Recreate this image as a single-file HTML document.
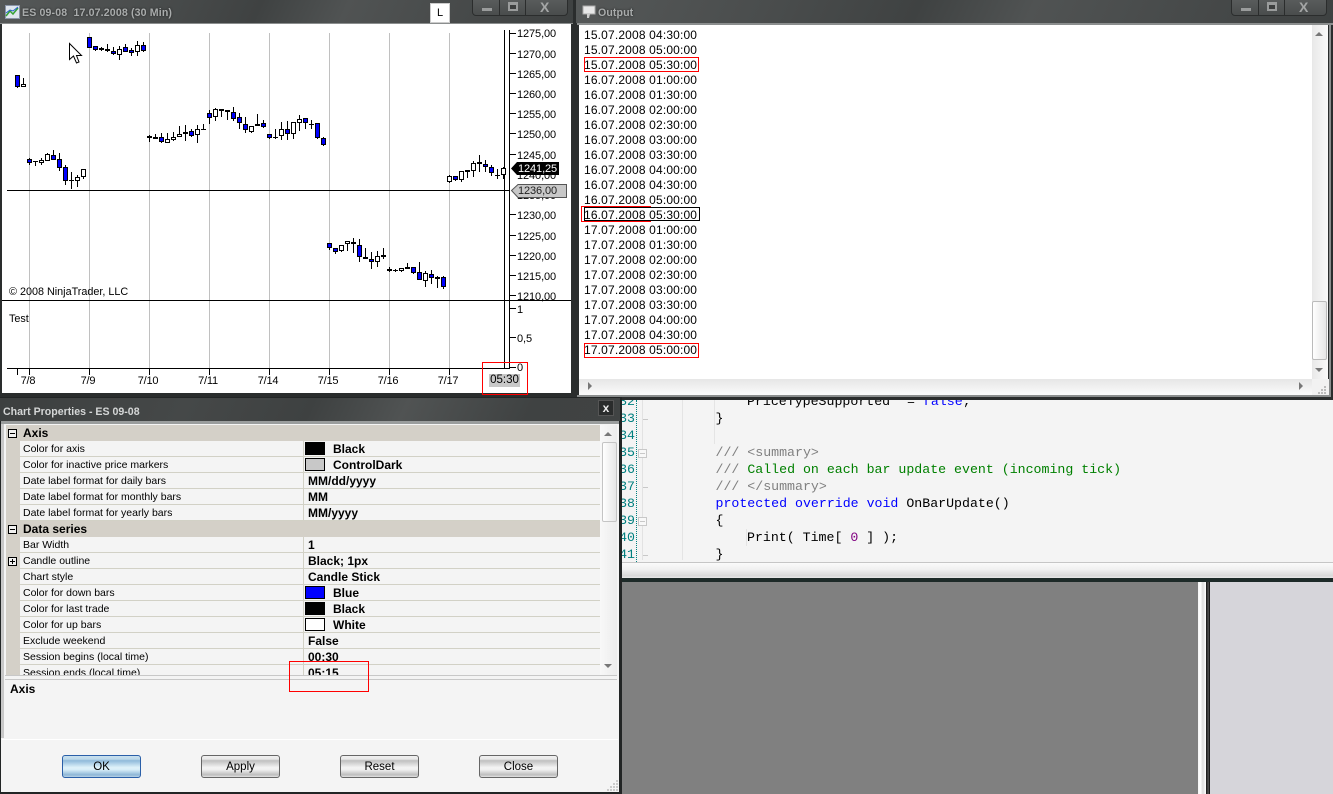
<!DOCTYPE html>
<html><head><meta charset="utf-8"><title>Chart</title>
<style>
html,body{margin:0;padding:0;background:#f4f4f4}
#p{position:relative;width:1333px;height:794px;overflow:hidden;font-family:"Liberation Sans",sans-serif;font-size:11px;color:#000;background:#f4f4f4}
#p div,#p span.a,#p svg{position:absolute}
.t{white-space:pre;line-height:14px}
.tb{background:linear-gradient(115deg,#555858 0,#4a4d4d 25%,#3f4242 45%,#505353 60%,#474a4a 80%,#3e4141 100%)}
.tt{font-weight:bold;color:#a9acac;white-space:pre;text-shadow:0 0 2px #222}
.r{left:14px;width:580px;height:15px;background:#f4f4f4;border-bottom:1px solid #d2d1c6}
.l{left:17px;line-height:17px;white-space:pre;font-size:10.5px}
.v{left:302px;line-height:17px;white-space:pre;font-size:12px;font-weight:bold}
.n{left:327px;line-height:17px;white-space:pre;font-size:12px;font-weight:bold}
.s{left:299px;width:18px;height:11px;border:1px solid #000}
.h{left:0;width:594px;height:16px;background:#d4d0c8;line-height:16px;font-weight:bold;font-size:12px}
.b{height:21px;width:77px;border:1px solid #666;border-radius:3px;text-align:center;line-height:22px;font-size:11.5px;background:linear-gradient(#f0f0f0 0,#e8e8e8 15%,#bfbfbf 22%,#f4f4f4 55%,#f0f0f0 65%,#bdbdbd 90%,#e4e4e4 100%)}
.pr{left:517px;line-height:14px;font-size:11px;letter-spacing:-.1px}
.d{top:374px;width:40px;text-align:center;line-height:14px;font-size:11px;letter-spacing:-.2px}
.c{font-family:"Liberation Mono",monospace;font-size:13.25px;line-height:17px;white-space:pre;color:#000}
.g{color:#808080}.gr{color:#008000}.bl{color:#0000ff}
.ln{left:622px;width:13px;text-align:right;overflow:hidden;direction:rtl;font-family:"Liberation Mono",monospace;font-size:13.25px;line-height:17px;color:#008080}
.box{border:1px solid #c8c8c8;width:7px;height:7px;left:638px;background:#f8f8f8}
.red{background:#ff0000}
.blk{background:#000}
</style></head><body><div id="p">

<!-- code window -->
<div style="left:622px;top:400px;width:711px;height:162px;background:#f4f4f4;overflow:hidden"></div>
<div style="left:636px;top:400px;height:162px;border-left:1px dotted #008080"></div>
<div style="left:642px;top:400px;width:1px;height:160px;background:#e2e2e2"></div>
<div style="left:682px;top:400px;width:1px;height:160px;background:#e4e4e4"></div>
<div style="left:714px;top:400px;width:1px;height:34px;background:#e4e4e4"></div>
<div style="left:714px;top:427px;width:1px;height:17px;background:#e4e4e4"></div>
<div style="left:746px;top:529px;width:1px;height:17px;background:#e4e4e4"></div>
<div class="ln" style="top:393px">32</div>
<div class="ln" style="top:410px">33</div>
<div class="ln" style="top:427px">34</div>
<div class="ln" style="top:444px">35</div>
<div class="ln" style="top:461px">36</div>
<div class="ln" style="top:478px">37</div>
<div class="ln" style="top:495px">38</div>
<div class="ln" style="top:512px">39</div>
<div class="ln" style="top:529px">40</div>
<div class="ln" style="top:546px">41</div>
<div class="box" style="top:449px"></div>
<div class="box" style="top:517px"></div>
<div style="left:640px;top:453px;width:5px;height:1px;background:#c8c8c8"></div>
<div style="left:640px;top:521px;width:5px;height:1px;background:#c8c8c8"></div>
<div style="left:643px;top:419px;width:5px;height:1px;background:#c8c8c8"></div>
<div style="left:643px;top:487px;width:5px;height:1px;background:#c8c8c8"></div>
<div style="left:643px;top:555px;width:5px;height:1px;background:#c8c8c8"></div>
<div style="left:622px;top:400px;width:711px;height:162px;overflow:hidden">
<div class="c" style="left:125px;top:-7px">PriceTypeSupported</div>
<div class="c" style="left:285px;top:-7px">= <span class="bl">false</span>;</div>
<div class="c" style="left:93.5px;top:10px">}</div>
<div class="c g" style="left:93.5px;top:44px">/// &lt;summary&gt;</div>
<div class="c" style="left:93.5px;top:61px"><span class="g">/// </span><span class="gr">Called on each bar update event (incoming tick)</span></div>
<div class="c g" style="left:93.5px;top:78px">/// &lt;/summary&gt;</div>
<div class="c" style="left:93.5px;top:95px"><span class="bl">protected override void</span> OnBarUpdate()</div>
<div class="c" style="left:93.5px;top:112px">{</div>
<div class="c" style="left:125px;top:129px">Print( Time[ <span style="color:#800080">0</span> ] );</div>
<div class="c" style="left:93.5px;top:146px">}</div>
</div>
<!-- code scrollbar -->
<div style="left:622px;top:562px;width:711px;height:16px;border-top:1px solid #c6c6c6;background:linear-gradient(#fbfbfb,#f0f0f0 40%,#d8d8d8 80%,#f0f0f0)"></div>
<div style="left:622px;top:578px;width:711px;height:4px;background:#1d2a28"></div>
<!-- bottom panels -->
<div style="left:622px;top:582px;width:576px;height:212px;background:#808080"></div>
<div style="left:1198px;top:582px;width:8px;height:212px;background:linear-gradient(90deg,#f4f4f4,#fff 30%,#ddd 60%,#fff)"></div>
<div style="left:1206px;top:582px;width:4px;height:212px;background:linear-gradient(90deg,#111,#555 60%,#000)"></div>
<div style="left:1210px;top:582px;width:123px;height:212px;background:#d6d5da"></div>

<!-- chart window -->
<div style="left:0;top:0;width:574px;height:397px;background:#2a2d2d"></div>
<div class="tb" style="left:0;top:0;width:573px;height:23px"></div>
<div style="left:0;top:23px;width:573px;height:1px;background:#8b8e8e"></div>
<svg style="left:5px;top:5px" width="15" height="14" viewBox="0 0 15 14"><rect x=".5" y=".5" width="14" height="13" fill="#dfe6ee" stroke="#8a94a8"/><path d="M1 11L5 6l3 3 5-6" fill="none" stroke="#35a035" stroke-width="1.5"/><path d="M1 8l4-3 3 1 5-4" fill="none" stroke="#2a5fd0"/></svg>
<div class="tt t" style="left:22px;top:6px;font-size:10.6px;letter-spacing:.14px">ES 09-08  17.07.2008 (30 Min)</div>
<div style="left:430px;top:3px;width:18px;height:18px;background:#fff;border:1px solid #ccc;text-align:center;line-height:19px;font-size:11px">L</div>
<div style="left:472px;top:-2px;width:94px;height:16px;border:1px solid #2b2d2d;border-radius:0 0 4px 4px;background:linear-gradient(#5a5d5d,#4a4d4d)"></div>
<div style="left:499px;top:0;width:1px;height:15px;background:#2b2d2d"></div>
<div style="left:525px;top:0;width:1px;height:15px;background:#2b2d2d"></div>
<div style="left:482px;top:8px;width:10px;height:3px;background:#9a9c9c"></div>
<div style="left:508px;top:2px;width:6px;height:4px;border:2px solid #9a9c9c;border-top-width:3px;background:#3d3f3f"></div>
<div style="left:540px;top:0;font-weight:bold;font-size:14px;line-height:14px;color:#a4a6a6">X</div>

<div style="left:2px;top:24px;width:569px;height:369px;background:#fff"></div>
<svg style="left:0;top:0" width="573" height="395" viewBox="0 0 573 395" shape-rendering="crispEdges">
<path d="M29.5 33V368M89.5 33V368M149.5 33V368M209.5 33V368M269.5 33V368M329.5 33V368M389.5 33V368M449.5 33V368" stroke="#c0c0c0" fill="none"/>
<path d="M7 190.5H510M2 300.5H571M7 368.5H510M504.5 30V368M509.5 30V368M510 33.5h6M510 53.5h6M510 73.5h6M510 93.5h6M510 113.5h6M510 133.5h6M510 154.5h6M510 214.5h6M510 235.5h6M510 255.5h6M510 275.5h6M510 295.5h6M510 308.5h6M510 337.5h6M510 367.5h6M17.5 368v7M29.5 368v7M89.5 368v7M149.5 368v7M209.5 368v7M269.5 368v7M329.5 368v7M389.5 368v7M449.5 368v7" stroke="#000" fill="none"/>
<path stroke="#000" fill="none" d="M17.5 75V88M23.5 78V87M29.5 158V165M35.5 161V166M41.5 158V165M47.5 153V161M53.5 150V160M59.5 153V171M65.5 165V185M71.5 172V189M77.5 175V187M83.5 169V179M89.5 37V48M95.5 46V51M101.5 47V51M107.5 44V52M113.5 47V55M119.5 46V60M125.5 44V52M131.5 48V56M137.5 41V56M143.5 42V52M149.5 135V142M155.5 134V139M161.5 133V143M167.5 133V143M173.5 132V141M179.5 126V137M185.5 125V141M191.5 129V137M197.5 125V143M203.5 124V129M209.5 110V124M215.5 108V121M221.5 109V117M227.5 110V120M233.5 107V121M239.5 113V129M245.5 117V133M251.5 126V133M257.5 114V126M263.5 120V128M269.5 134V139M275.5 129V139M281.5 122V140M287.5 121V140M293.5 122V139M299.5 115V131M305.5 118V129M311.5 120V129M317.5 123V139M323.5 137V146M329.5 243V250M335.5 248V254M341.5 245V252M347.5 241V251M353.5 238V253M359.5 239V262M365.5 248V259M371.5 252V269M377.5 251V267M383.5 248V259M389.5 267V272M395.5 269V272M401.5 268V272M407.5 263V269M413.5 267V274M419.5 262V280M425.5 271V287M431.5 270V284M437.5 276V288M443.5 276V289M449.5 175V183M455.5 176V181M461.5 171V182M467.5 171V178M473.5 161V177M479.5 155V172M485.5 160V172M491.5 165V176M497.5 169V179M503.5 167V179"/>
<path stroke="#000" fill="none" d="M33 161.5h5M69 180.5h5M99 48.5h5M99 49.5h5M105 49.5h5M105 50.5h5M153 137.5h5M153 138.5h5M201 129.5h5M225 110.5h5M225 111.5h5M273 137.5h5M309 124.5h5M363 258.5h5M363 257.5h5M381 256.5h5M381 255.5h5M387 269.5h5M387 270.5h5M393 270.5h5M405 267.5h5M405 268.5h5M465 171.5h5M465 170.5h5M495 175.5h5"/>
<path stroke="#000" fill="#0000ff" d="M15.5 75.5h4v11h-4zM27.5 159.5h4v3h-4zM51.5 155.5h4v4h-4zM57.5 159.5h4v8h-4zM63.5 167.5h4v13h-4zM87.5 37.5h4v10h-4zM93.5 46.5h4v3h-4zM111.5 51.5h4v2h-4zM123.5 47.5h4v4h-4zM129.5 50.5h4v2h-4zM141.5 45.5h4v5h-4zM159.5 137.5h4v4h-4zM189.5 131.5h4v4h-4zM207.5 113.5h4v4h-4zM231.5 112.5h4v6h-4zM237.5 117.5h4v5h-4zM243.5 124.5h4v5h-4zM261.5 123.5h4v3h-4zM267.5 134.5h4v3h-4zM285.5 129.5h4v4h-4zM303.5 118.5h4v4h-4zM315.5 123.5h4v14h-4zM321.5 138.5h4v6h-4zM327.5 243.5h4v4h-4zM333.5 248.5h4v3h-4zM351.5 242.5h4v1h-4zM357.5 245.5h4v11h-4zM369.5 259.5h4v2h-4zM411.5 267.5h4v5h-4zM417.5 272.5h4v7h-4zM429.5 274.5h4v3h-4zM441.5 277.5h4v9h-4zM453.5 176.5h4v3h-4zM477.5 162.5h4v1h-4zM483.5 164.5h4v2h-4zM489.5 167.5h4v5h-4z"/>
<path stroke="#000" fill="#fff" d="M21.5 84.5h4v2h-4zM39.5 160.5h4v2h-4zM45.5 154.5h4v6h-4zM75.5 177.5h4v3h-4zM81.5 169.5h4v7h-4zM117.5 49.5h4v5h-4zM135.5 45.5h4v6h-4zM147.5 136.5h4v1h-4zM165.5 139.5h4v3h-4zM171.5 137.5h4v2h-4zM177.5 134.5h4v2h-4zM183.5 132.5h4v1h-4zM195.5 129.5h4v5h-4zM213.5 109.5h4v7h-4zM219.5 109.5h4v1h-4zM249.5 126.5h4v5h-4zM255.5 124.5h4v1h-4zM279.5 129.5h4v6h-4zM291.5 122.5h4v11h-4zM297.5 119.5h4v3h-4zM339.5 245.5h4v5h-4zM345.5 241.5h4v2h-4zM375.5 256.5h4v5h-4zM399.5 268.5h4v2h-4zM423.5 273.5h4v7h-4zM435.5 277.5h4v1h-4zM447.5 176.5h4v5h-4zM459.5 171.5h4v8h-4zM471.5 163.5h4v7h-4zM501.5 168.5h4v6h-4z"/>
</svg>
<svg style="left:68px;top:42px" width="15" height="23" viewBox="0 0 15 23"><path d="M1.5 1.5V17.5L5.5 14L8.5 21L11 20L8.5 13.5H13.5Z" fill="#fff" stroke="#000"/></svg>

<div class="pr t" style="top:27px">1275,00</div>
<div class="pr t" style="top:48px">1270,00</div>
<div class="pr t" style="top:68px">1265,00</div>
<div class="pr t" style="top:88px">1260,00</div>
<div class="pr t" style="top:108px">1255,00</div>
<div class="pr t" style="top:128px">1250,00</div>
<div class="pr t" style="top:149px">1245,00</div>
<div class="pr t" style="top:169px">1240,00</div>
<div class="pr t" style="top:189px">1235,00</div>
<div class="pr t" style="top:209px">1230,00</div>
<div class="pr t" style="top:230px">1225,00</div>
<div class="pr t" style="top:250px">1220,00</div>
<div class="pr t" style="top:270px">1215,00</div>
<div class="pr t" style="top:290px">1210,00</div>
<div style="left:510px;top:300px;width:61px;height:1px;background:#000"></div>
<div class="pr t" style="top:303px">1</div>
<div class="pr t" style="top:332px">0,5</div>
<div class="pr t" style="top:361px">0</div>
<svg style="left:510px;top:161px" width="59" height="38" viewBox="0 0 59 38"><path d="M1 7.5L7 1H49V14H7Z" fill="#000"/><path d="M1.5 29.5L8 23.5H56.5V36.5H8Z" fill="#c8c8c8" stroke="#555"/></svg>
<div class="t" style="left:518px;top:162px;color:#fff;font-size:11px;letter-spacing:-.1px">1241,25</div>
<div class="t" style="left:518px;top:184px;color:#222;font-size:11px;letter-spacing:-.1px">1236,00</div>

<div class="t" style="left:9px;top:285px;font-size:10.8px">© 2008 NinjaTrader, LLC</div>
<div class="t" style="left:9px;top:312px;font-size:10.8px">Test</div>
<div class="d" style="left:8px">7/8</div>
<div class="d" style="left:68px">7/9</div>
<div class="d" style="left:128px">7/10</div>
<div class="d" style="left:188px">7/11</div>
<div class="d" style="left:248px">7/14</div>
<div class="d" style="left:308px">7/15</div>
<div class="d" style="left:368px">7/16</div>
<div class="d" style="left:428px">7/17</div>
<div class="t" style="left:489px;top:374px;width:31px;height:13px;line-height:13px;background:#c8c8c8;text-align:center;font-size:11.5px">05:30</div>
<div class="red" style="left:482px;top:362px;width:46px;height:1px"></div>
<div class="red" style="left:482px;top:394px;width:46px;height:1px"></div>
<div class="red" style="left:482px;top:362px;width:1px;height:33px"></div>
<div class="red" style="left:527px;top:362px;width:1px;height:33px"></div>

<!-- output window -->
<div style="left:573px;top:0;width:760px;height:400px;background:#2a2d2d"></div>
<div class="tb" style="left:576px;top:0;width:757px;height:23px"></div>
<div style="left:577px;top:23px;width:756px;height:2px;background:#8b8e8e"></div>
<div style="left:1329px;top:24px;width:2px;height:373px;background:#8b8e8e"></div>
<svg style="left:582px;top:5px" width="14" height="14" viewBox="0 0 14 14"><rect x="1" y="1" width="12" height="8" fill="#e8e8e8" stroke="#aaa"/><path d="M5 9v4h2l1-4" fill="#ccc"/></svg>
<div class="tt t" style="left:598px;top:6px;font-size:10.6px;letter-spacing:.1px">Output</div>
<div style="left:1231px;top:-2px;width:94px;height:16px;border:1px solid #2b2d2d;border-radius:0 0 4px 4px;background:linear-gradient(#5a5d5d,#4a4d4d)"></div>
<div style="left:1258px;top:0;width:1px;height:15px;background:#2b2d2d"></div>
<div style="left:1284px;top:0;width:1px;height:15px;background:#2b2d2d"></div>
<div style="left:1241px;top:8px;width:10px;height:3px;background:#9a9c9c"></div>
<div style="left:1267px;top:2px;width:6px;height:4px;border:2px solid #9a9c9c;border-top-width:3px;background:#3d3f3f"></div>
<div style="left:1299px;top:0;font-weight:bold;font-size:14px;line-height:14px;color:#a4a6a6">X</div>
<div style="left:579px;top:25px;width:733px;height:354px;background:#fff"></div>
<div style="left:1312px;top:25px;width:16px;height:354px;background:linear-gradient(90deg,#e8e8e8,#fafafa)"></div>
<div style="left:1312px;top:301px;width:13px;height:57px;border:1px solid #bbb;border-radius:2px;background:linear-gradient(90deg,#fff,#e6e6e6)"></div>
<div style="left:579px;top:379px;width:733px;height:16px;background:linear-gradient(#e6e6e6,#fbfbfb)"></div>
<div style="left:1312px;top:379px;width:17px;height:16px;background:#f2f2f2"></div>
<div style="left:577px;top:395px;width:753px;height:2px;background:#8b8e8e"></div>
<svg style="left:580px;top:25px" width="750" height="372" viewBox="0 0 750 372"><path d="M735 11l4-4 4 4zM735 343l4 4 4-4zM12 361l-4-4v8zM719 357l4 4-4 4z" fill="#777"/><path d="M741 365h2M744 362h2M738 368h2M741 368h2M744 365h2M744 368h2" stroke="#aaa" fill="none" stroke-width="1.5"/></svg>
<div class="t" style="left:584px;top:28px;font-size:12px;line-height:15px;letter-spacing:.16px">15.07.2008 04:30:00
15.07.2008 05:00:00
15.07.2008 05:30:00
16.07.2008 01:00:00
16.07.2008 01:30:00
16.07.2008 02:00:00
16.07.2008 02:30:00
16.07.2008 03:00:00
16.07.2008 03:30:00
16.07.2008 04:00:00
16.07.2008 04:30:00
16.07.2008 05:00:00
16.07.2008 05:30:00
17.07.2008 01:00:00
17.07.2008 01:30:00
17.07.2008 02:00:00
17.07.2008 02:30:00
17.07.2008 03:00:00
17.07.2008 03:30:00
17.07.2008 04:00:00
17.07.2008 04:30:00
17.07.2008 05:00:00</div>
<div class="red" style="left:584px;top:57px;width:115px;height:1px"></div>
<div class="red" style="left:584px;top:71px;width:115px;height:1px"></div>
<div class="red" style="left:584px;top:57px;width:1px;height:15px"></div>
<div class="red" style="left:698px;top:57px;width:1px;height:15px"></div>
<div class="blk" style="left:584px;top:207px;width:116px;height:1px"></div>
<div class="blk" style="left:584px;top:220px;width:116px;height:1px"></div>
<div class="blk" style="left:699px;top:207px;width:1px;height:14px"></div>
<div class="blk" style="left:584px;top:207px;width:1px;height:14px"></div>
<div class="red" style="left:581px;top:206px;width:70px;height:1px"></div>
<div class="red" style="left:581px;top:221px;width:70px;height:1px"></div>
<div class="red" style="left:581px;top:206px;width:1px;height:16px"></div>
<div class="red" style="left:584px;top:343px;width:115px;height:1px"></div>
<div class="red" style="left:584px;top:357px;width:115px;height:1px"></div>
<div class="red" style="left:584px;top:343px;width:1px;height:15px"></div>
<div class="red" style="left:698px;top:343px;width:1px;height:15px"></div>

<!-- properties window -->
<div style="left:0;top:397px;width:622px;height:397px;background:#222525"></div>
<div style="left:1px;top:398px;width:618px;height:394px;background:#f4f4f4"></div>
<div style="left:0;top:398px;width:620px;height:23px;background:linear-gradient(115deg,#3c3f3f 0,#454848 30%,#3e4141 50%,#505353 65%,#3f4242 85%,#404343 100%)"></div>
<div style="left:1px;top:421px;width:618px;height:3px;background:#9a9d9d"></div>
<div style="left:1px;top:424px;width:3px;height:314px;background:#c8c8c8"></div>
<div class="t" style="left:3px;top:405px;font-weight:bold;color:#d4d6d6;font-size:10.6px">Chart Properties - ES 09-08</div>
<div style="left:598px;top:400px;width:14px;height:14px;background:#2a2c2c;border:1px solid #555;text-align:center;font-weight:bold;font-size:12px;line-height:14px;color:#eee">x</div>

<div style="left:6px;top:425px;width:594px;height:250px;overflow:hidden;background:#d4d0c8">
<div class="h"><span style="margin-left:17px">Axis</span></div>
<div class="r" style="top:16px"></div><div class="l" style="top:16px">Color for axis</div><div class="s" style="top:17px;background:#000"></div><div class="n" style="top:16px">Black</div>
<div class="r" style="top:32px"></div><div class="l" style="top:32px">Color for inactive price markers</div><div class="s" style="top:33px;background:#c8c8c8"></div><div class="n" style="top:32px">ControlDark</div>
<div class="r" style="top:48px"></div><div class="l" style="top:48px">Date label format for daily bars</div><div class="v" style="top:48px">MM/dd/yyyy</div>
<div class="r" style="top:64px"></div><div class="l" style="top:64px">Date label format for monthly bars</div><div class="v" style="top:64px">MM</div>
<div class="r" style="top:80px"></div><div class="l" style="top:80px">Date label format for yearly bars</div><div class="v" style="top:80px">MM/yyyy</div>
<div class="h" style="top:96px"><span style="margin-left:17px">Data series</span></div>
<div class="r" style="top:112px"></div><div class="l" style="top:112px">Bar Width</div><div class="v" style="top:112px">1</div>
<div class="r" style="top:128px"></div><div class="l" style="top:128px">Candle outline</div><div class="v" style="top:128px">Black; 1px</div>
<div class="r" style="top:144px"></div><div class="l" style="top:144px">Chart style</div><div class="v" style="top:144px">Candle Stick</div>
<div class="r" style="top:160px"></div><div class="l" style="top:160px">Color for down bars</div><div class="s" style="top:161px;background:#00f"></div><div class="n" style="top:160px">Blue</div>
<div class="r" style="top:176px"></div><div class="l" style="top:176px">Color for last trade</div><div class="s" style="top:177px;background:#000"></div><div class="n" style="top:176px">Black</div>
<div class="r" style="top:192px"></div><div class="l" style="top:192px">Color for up bars</div><div class="s" style="top:193px;background:#fff"></div><div class="n" style="top:192px">White</div>
<div class="r" style="top:208px"></div><div class="l" style="top:208px">Exclude weekend</div><div class="v" style="top:208px">False</div>
<div class="r" style="top:224px"></div><div class="l" style="top:224px">Session begins (local time)</div><div class="v" style="top:224px">00:30</div>
<div class="r" style="top:240px"></div><div class="l" style="top:240px">Session ends (local time)</div><div class="v" style="top:240px">05:15</div>
<div style="left:297px;top:16px;width:1px;height:80px;background:#d2d1c6"></div>
<div style="left:297px;top:112px;width:1px;height:138px;background:#d2d1c6"></div>
</div>
<svg style="left:6px;top:425px" width="14" height="150" viewBox="0 0 14 150" shape-rendering="crispEdges"><path d="M2.5 4.5h8v8h-8zM2.5 100.5h8v8h-8zM2.5 132.5h8v8h-8z" fill="#f0f0f0" stroke="#000"/><path d="M4 8.5h5M4 104.5h5M4 136.5h5M6.5 134v5" stroke="#000"/></svg>
<div style="left:600px;top:425px;width:17px;height:250px;background:linear-gradient(90deg,#f8f8f8,#ececec)"></div>
<div style="left:602px;top:442px;width:13px;height:78px;border:1px solid #c4c4c4;border-radius:2px;background:linear-gradient(90deg,#fff,#e6e6e6)"></div>
<svg style="left:600px;top:425px" width="17" height="250" viewBox="0 0 17 250"><path d="M4 11l4-4 4 4zM4 239l4 4 4-4z" fill="#777"/></svg>
<div style="left:5px;top:675px;width:612px;height:1px;background:#c8c8c8"></div>
<div style="left:5px;top:679px;width:612px;height:59px;border-top:1px solid #c8c8c8;border-bottom:1px solid #c8c8c8;background:#f4f4f4"></div>
<div class="t" style="left:10px;top:682px;font-weight:bold;font-size:12px">Axis</div>
<div style="left:2px;top:739px;width:616px;height:1px;background:#fff"></div>
<div class="b" style="left:62px;top:755px;border-color:#2a5fa8;background:linear-gradient(#c8e0ee 0,#bcd8ea 15%,#8fbada 22%,#dff2fa 55%,#d8eef8 65%,#8db6d6 90%,#b8d2e6 100%)">OK</div>
<div class="b" style="left:201px;top:755px">Apply</div>
<div class="b" style="left:340px;top:755px">Reset</div>
<div class="b" style="left:479px;top:755px">Close</div>
<svg style="left:606px;top:779px" width="13" height="13" viewBox="0 0 13 13"><path d="M10 2h2M7 5h2M10 5h2M4 8h2M7 8h2M10 8h2M1 11h2M4 11h2M7 11h2M10 11h2" stroke="#bbb" stroke-width="1.5" fill="none"/></svg>
<div class="red" style="left:289px;top:661px;width:80px;height:1px"></div>
<div class="red" style="left:289px;top:691px;width:80px;height:1px"></div>
<div class="red" style="left:289px;top:661px;width:1px;height:31px"></div>
<div class="red" style="left:368px;top:661px;width:1px;height:31px"></div>
</div></body></html>
